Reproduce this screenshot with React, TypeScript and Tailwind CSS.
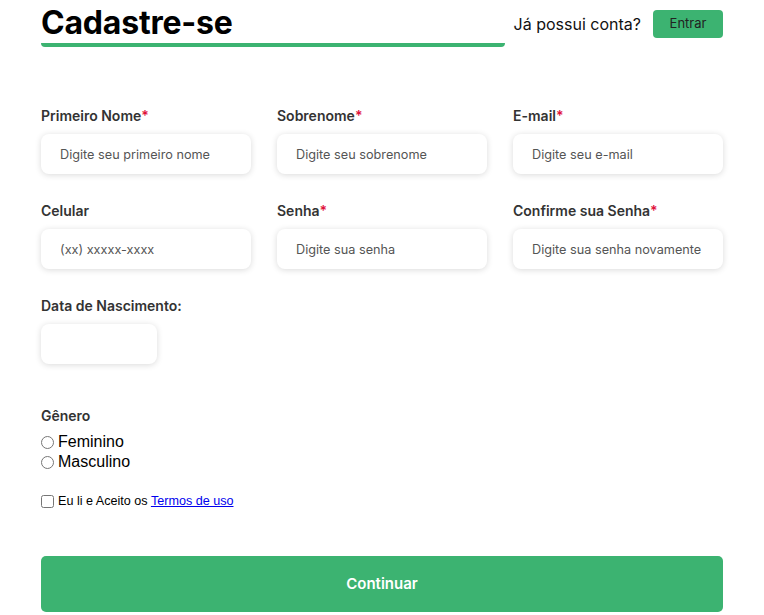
import React from 'react';

const Field = ({ label, req, placeholder, w = 'w-full' }: { label: string; req?: boolean; placeholder?: string; w?: string }) => (
    <div className="flex flex-col">
        <label className="text-[14px] font-semibold text-[#333] leading-[17px]">
            {label}
            {req && <span className="text-[#e0113b]">*</span>}
        </label>
        <input
            placeholder={placeholder}
            className={`${w} mt-[10px] h-[40px] rounded-[8px] bg-white px-[19px] text-[12.7px] text-[#333] placeholder:text-[#555] shadow-[0_1px_6px_rgba(0,0,0,0.15)] outline-none`}
        />
    </div>
);

export default function App() {
    return (
        <div className="w-[764px] min-h-[615px] bg-white px-[41px] font-['Inter',sans-serif] text-black">
            <div className="flex items-start">
                <div className="w-[464px] border-b-[4px] border-[#3cb371] rounded-sm pt-[4px] pb-[1px]">
                    <h1 className="text-[32px] font-bold leading-[38px] tracking-[-0.2px]">Cadastre-se</h1>
                </div>
                <div className="ml-auto flex items-center gap-[12px] pt-[10px]">
                    <span className="text-[16px] text-[#111]">Já possui conta?</span>
                    <button className="h-[28px] w-[70px] rounded-[4px] bg-[#3cb371] text-[13px] text-[#222]">Entrar</button>
                </div>
            </div>

            <div className="mt-[60px] grid grid-cols-3 gap-x-[26px] gap-y-[28px]">
                <Field label="Primeiro Nome" req placeholder="Digite seu primeiro nome" />
                <Field label="Sobrenome" req placeholder="Digite seu sobrenome" />
                <Field label="E-mail" req placeholder="Digite seu e-mail" />
                <Field label="Celular" placeholder="(xx) xxxxx-xxxx" />
                <Field label="Senha" req placeholder="Digite sua senha" />
                <Field label="Confirme sua Senha" req placeholder="Digite sua senha novamente" />
                <Field label="Data de Nascimento:" w="w-[116px]" />
            </div>

            <div className="mt-[43px]">
                <div className="text-[14px] font-semibold text-[#333] leading-[17px]">Gênero</div>
                <div className="mt-[8px] flex flex-col text-[16px] leading-[20px] font-['Liberation_Sans',sans-serif]">
                    <label className="flex items-center gap-[4px]">
                        <input type="radio" name="g" className="m-0 h-[13px] w-[13px]" />
                        <span>Feminino</span>
                    </label>
                    <label className="flex items-center gap-[4px]">
                        <input type="radio" name="g" className="m-0 h-[13px] w-[13px]" />
                        <span>Masculino</span>
                    </label>
                </div>
            </div>

            <label className="mt-[20px] flex items-center gap-[4px] text-[12.6px] font-['Liberation_Sans',sans-serif]">
                <input type="checkbox" className="m-0 h-[13px] w-[13px]" />
                <span>
                    Eu li e Aceito os <a href="#" className="text-[#0000ee] underline">Termos de uso</a>
                </span>
            </label>

            <button className="mt-[45px] h-[56px] w-full rounded-[5px] bg-[#3cb371] text-[15px] font-semibold text-white">Continuar</button>
        </div>
    );
}
